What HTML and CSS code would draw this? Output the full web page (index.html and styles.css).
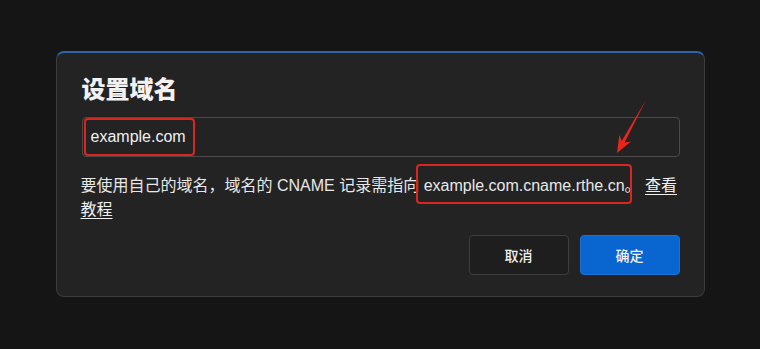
FILE: index.html
```html
<!DOCTYPE html>
<html lang="zh-CN">
<head>
  <meta charset="UTF-8">
  <meta name="viewport" content="width=device-width, initial-scale=1.0">
  <title>设置域名</title>
  <link rel="stylesheet" href="styles.css">
</head>
<body>

  <div class="page">
    <div class="dialog">
      <h1 class="title">设置域名</h1>

      <div class="field">
        <span class="mark mark-input">example.com</span>
      </div>

      <p class="hint">要使用自己的域名，域名的 CNAME 记录需指向 <span class="mark mark-cname">example.com.cname.rthe.cn。</span> <a href="#" class="link">查看教程</a></p>

      <div class="actions">
        <button class="btn btn-cancel">取消</button>
        <button class="btn btn-ok">确定</button>
      </div>
    </div>

    <!-- annotation arrow -->
    <svg class="arrow" width="760" height="349" viewBox="0 0 760 349">
      <polygon points="646,100 624.6,142.4 631,141.4 617,153 619.3,135 621.8,140.8" fill="#e8261e"/>
    </svg>
  </div>

</body>
</html>
```

FILE: styles.css
```css
* {
  box-sizing: border-box;
}

body {
  margin: 0;
  background-color: #151515;
  font-family: "Liberation Sans", "Noto Sans CJK SC", sans-serif;
  color: #e8e8e8;
}

.page {
  position: relative;
  height: 349px;
  display: flex;
  align-items: center;
  justify-content: center;
}

.dialog {
  width: 649px;
  margin-top: -1px;
  background-color: #232323;
  border: 1px solid #3c3c3c;
  border-top: 2px solid #2a64ab;
  border-radius: 8px;
  padding: 21px 24px 21px 25px;
}

.title {
  margin: 0;
  font-size: 24px;
  line-height: 32px;
  font-weight: 900;
  color: #f2f2f2;
}

/* domain input */
.field {
  margin-top: 11px;
  height: 40px;
  border: 1px solid #4a4a4a;
  border-radius: 4px;
  display: flex;
  align-items: center;
  padding-left: 8px;
  font-size: 16px;
  color: #f0f0f0;
}

.hint {
  margin: 17px 0 0 -1px;
  font-size: 16px;
  line-height: 24px;
  color: #e8e8e8;
}

.link {
  color: #f0f0f0;
  text-decoration: underline;
  text-underline-offset: 3px;
}

/* red annotation boxes */
.mark {
  position: relative;
}

.mark::after {
  content: "";
  position: absolute;
  border: 2px solid #d9261e;
  border-radius: 4px;
}

.mark-input::after {
  left: -7px;
  right: -9px;
  top: -10px;
  bottom: -10px;
}

.mark-cname::after {
  left: -8px;
  right: 9px;
  top: -13px;
  bottom: -10px;
}

.actions {
  margin-top: 13px;
  display: flex;
  justify-content: flex-end;
  gap: 11px;
}

.btn {
  width: 100px;
  height: 40px;
  border-radius: 4px;
  font-family: "Liberation Sans", "Noto Sans CJK SC", sans-serif;
  font-size: 14px;
  font-weight: 500;
  color: #f2f2f2;
  cursor: pointer;
}

.btn-cancel {
  background-color: #1e1e1e;
  border: 1px solid #3e3e3e;
}

.btn-ok {
  background-color: #0966d1;
  border: 1px solid #1a72d6;
}

.arrow {
  position: absolute;
  top: 0;
  left: 0;
  pointer-events: none;
}
```
